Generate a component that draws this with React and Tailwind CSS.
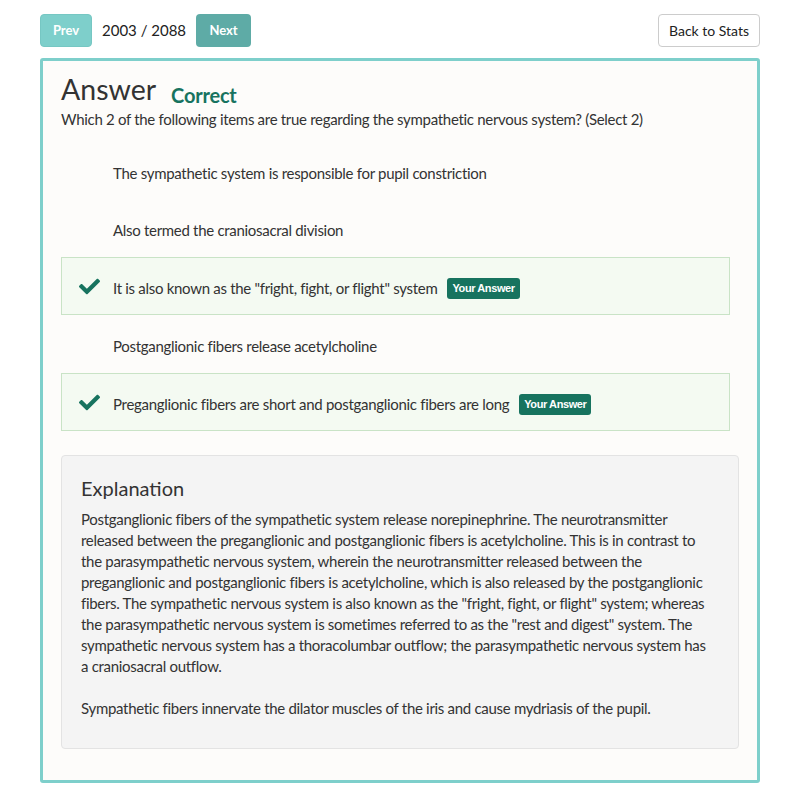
import { FaCheck } from "react-icons/fa";

const options = [
  { text: "The sympathetic system is responsible for pupil constriction", picked: false },
  { text: "Also termed the craniosacral division", picked: false },
  { text: 'It is also known as the "fright, fight, or flight" system', picked: true },
  { text: "Postganglionic fibers release acetylcholine", picked: false },
  { text: "Preganglionic fibers are short and postganglionic fibers are long", picked: true },
];

const explanation = [
  "Postganglionic fibers of the sympathetic system release norepinephrine. The neurotransmitter",
  "released between the preganglionic and postganglionic fibers is acetylcholine. This is in contrast to",
  "the parasympathetic nervous system, wherein the neurotransmitter released between the",
  "preganglionic and postganglionic fibers is acetylcholine, which is also released by the postganglionic",
  'fibers. The sympathetic nervous system is also known as the "fright, fight, or flight" system; whereas',
  'the parasympathetic nervous system is sometimes referred to as the "rest and digest" system. The',
  "sympathetic nervous system has a thoracolumbar outflow; the parasympathetic nervous system has",
  "a craniosacral outflow.",
];

function Option({ data }) {
  return (
    <div
      className={
        data.picked
          ? "flex items-center h-[58px] pt-[5px] mr-[9px] border border-[#c9e3c6] bg-[#f4faf2]"
          : "flex items-center h-[57px] pt-[5px] mr-[9px] border border-transparent"
      }
    >
      <div className="w-[51px] flex justify-center pl-[4px] -mt-[5px]">
        {data.picked && <FaCheck className="text-[#17735f] text-[21px]" />}
      </div>
      <span className="text-[15px] tracking-[-0.3px] text-[#333]">{data.text}</span>
      {data.picked && (
        <span className="ml-[10px] bg-[#17735f] text-white text-[11px] font-bold rounded-[3px] px-[5px] py-[2px] font-['Liberation_Sans',sans-serif] tracking-[-0.4px]">
          Your Answer
        </span>
      )}
    </div>
  );
}

export default function App() {
  return (
    <div className="min-h-[790px] bg-white font-['Lato',sans-serif] text-[#333]">
      <div className="flex items-center justify-between px-[40px] pt-[14px]">
        <div className="flex items-center">
          <button className="h-[33px] w-[52px] rounded-[4px] bg-[#7ecfcb] text-white text-[13px] font-bold border border-[#76c7c3]">
            Prev
          </button>
          <span className="mx-[10px] text-[15px] text-[#222]">2003 / 2088</span>
          <button className="h-[33px] w-[55px] rounded-[4px] bg-[#5eaba6] text-white text-[13px] font-bold">
            Next
          </button>
        </div>
        <button className="h-[33px] w-[102px] rounded-[4px] bg-white border border-[#cccccc] text-[14px] text-[#222]">
          Back to Stats
        </button>
      </div>

      <div className="mx-[40px] mt-[11px] border-[3px] border-[#7ecfcb] rounded-[3px] bg-[#fdfcfa] px-[18px] pt-[9px] pb-[31px]">
        <div className="flex items-end">
          <h1 className="text-[28.5px] leading-[38px] text-[#333]">Answer</h1>
          <span className="ml-[15px] -mb-[2px] text-[20px] font-bold tracking-[-0.2px] text-[#17735f]">Correct</span>
        </div>
        <p className="text-[15px] tracking-[-0.3px] leading-[22px]">
          Which 2 of the following items are true regarding the sympathetic nervous system? (Select 2)
        </p>
        <div className="mt-[12px] flex flex-col gap-[0.5px]">
          {options.map((o, i) => (
            <Option key={i} data={o} />
          ))}
        </div>

        <div className="mt-[24px] bg-[#f4f4f4] border border-[#e3e3e3] rounded-[4px] px-[19px] pt-[17px] pb-[29px]">
          <h2 className="text-[20px] leading-[30px] text-[#333]">Explanation</h2>
          <div className="mt-[6px] text-[15px] tracking-[-0.3px] leading-[21px] text-[#333]">
            <p>
              {explanation.map((line, i) => (
                <span key={i} className="block whitespace-nowrap">
                  {line}
                </span>
              ))}
            </p>
            <p className="mt-[21px]">
              Sympathetic fibers innervate the dilator muscles of the iris and cause mydriasis of the pupil.
            </p>
          </div>
        </div>
      </div>
    </div>
  );
}
